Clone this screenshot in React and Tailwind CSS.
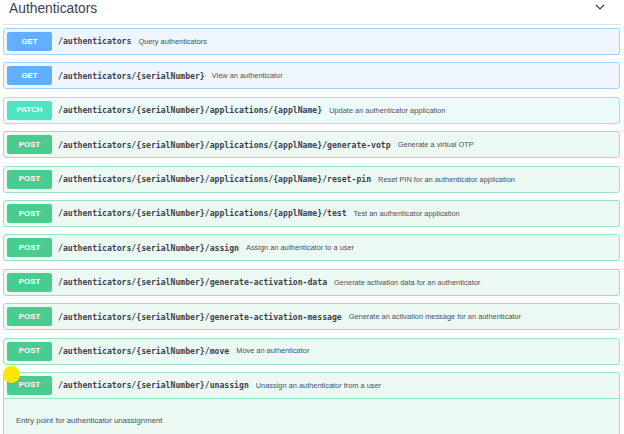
import React from 'react';

const ops = [
  { method: 'GET', path: '/authenticators', desc: 'Query authenticators' },
  { method: 'GET', path: '/authenticators/{serialNumber}', desc: 'View an authenticator' },
  { method: 'PATCH', path: '/authenticators/{serialNumber}/applications/{applName}', desc: 'Update an authenticator application' },
  { method: 'POST', path: '/authenticators/{serialNumber}/applications/{applName}/generate-votp', desc: 'Generate a virtual OTP' },
  { method: 'POST', path: '/authenticators/{serialNumber}/applications/{applName}/reset-pin', desc: 'Reset PIN for an authenticator application' },
  { method: 'POST', path: '/authenticators/{serialNumber}/applications/{applName}/test', desc: 'Test an authenticator application' },
  { method: 'POST', path: '/authenticators/{serialNumber}/assign', desc: 'Assign an authenticator to a user' },
  { method: 'POST', path: '/authenticators/{serialNumber}/generate-activation-data', desc: 'Generate activation data for an authenticator' },
  { method: 'POST', path: '/authenticators/{serialNumber}/generate-activation-message', desc: 'Generate an activation message for an authenticator' },
  { method: 'POST', path: '/authenticators/{serialNumber}/move', desc: 'Move an authenticator' },
];

const styles = {
  GET: { box: 'bg-[#eef5fd] border-[#a9d0f8]', badge: 'bg-[#61affe]' },
  PATCH: { box: 'bg-[#edfbf8] border-[#9fe8d7]', badge: 'bg-[#50e3c2]' },
  POST: { box: 'bg-[#ecf9f3] border-[#a0e0c2]', badge: 'bg-[#49cc90]' },
};

function OpHeader({ method, path, desc }) {
  return (
    <div className="h-[25px] flex items-center px-[3px]">
      <span
        className={`${styles[method].badge} w-[45px] h-[19px] rounded-[2px] flex items-center justify-center text-white font-bold text-[7.9px] shrink-0`}
      >
        {method}
      </span>
      <span className="ml-[6px] font-bold text-[8.15px] text-[#3b4151] whitespace-nowrap" style={{ fontFamily: '"DejaVu Sans Mono", monospace' }}>
        {path}
      </span>
      <span className="ml-[7px] text-[7.4px] text-[#4a5060] whitespace-nowrap">{desc}</span>
    </div>
  );
}

export default function App() {
  return (
    <div className="w-[624px] h-[434px] overflow-hidden bg-white relative" style={{ fontFamily: '"Liberation Sans", Arial, sans-serif' }}>
      <div className="mx-[3px] h-[25px] flex items-center justify-between border-b border-[#e3e3e3]">
        <h2 className="pl-[6px] text-[13.8px] text-[#3b4151] -mt-[5px]">Authenticators</h2>
        <svg className="mr-[16px] -mt-[10px]" width="10" height="6" viewBox="0 0 10 6" fill="none">
          <path d="M1 1l4 4 4-4" stroke="#3b4151" strokeWidth="1.2" />
        </svg>
      </div>

      <div className="mx-[3px] w-[617px] mt-[3px] flex flex-col gap-[7.4px]">
        {ops.map((op) => (
          <div key={op.path} className={`${styles[op.method].box} border rounded-[3px] h-[27px]`}>
            <OpHeader {...op} />
          </div>
        ))}
        <div className={`${styles.POST.box} border rounded-[3px] h-[120px]`}>
          <OpHeader method="POST" path="/authenticators/{serialNumber}/unassign" desc="Unassign an authenticator from a user" />
          <div className="border-t border-[#a0e0c2] pt-[16px] pl-[12px] text-[7.8px] text-[#4a5060]">
            Entry point for authenticator unassignment
          </div>
        </div>
      </div>

      <div className="absolute left-[3px] top-[366px] w-[17px] h-[17px] rounded-full bg-[#ffe600]" />
    </div>
  );
}
